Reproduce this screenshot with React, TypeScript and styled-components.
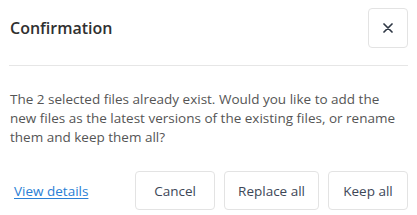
import styled, { createGlobalStyle } from "styled-components";

const GlobalStyle = createGlobalStyle`
    body {
        margin: 0;
        background: #ffffff;
        font-family: "Open Sans", "Liberation Sans", sans-serif;
    }
`

const Dialog = styled.div`
    width: 417px;
    height: 215px;
    box-sizing: border-box;
    padding: 8px 9px 0 9px;
    background: #ffffff;
`

const Header = styled.div`
    display: flex;
    align-items: center;
    justify-content: space-between;
    padding-bottom: 17px;
    border-bottom: 1px solid #e6e6e6;
`

const Title = styled.h2`
    margin: 0 0 0 1px;
    font-size: 16px;
    font-weight: 600;
    color: #303030;
`

const CloseButton = styled.button`
    width: 40px;
    height: 40px;
    display: flex;
    align-items: center;
    justify-content: center;
    padding: 0;
    background: #ffffff;
    border: 1px solid #e3e3e3;
    border-radius: 4px;
    color: #2f3845;
    cursor: pointer;
`

const Message = styled.p`
    margin: 24px 0 0 1px;
    font-size: 13.5px;
    line-height: 19px;
    color: #555555;
`

const Footer = styled.div`
    display: flex;
    align-items: center;
    margin-top: 24px;
`

const DetailsLink = styled.a`
    margin-left: 5px;
    font-size: 13.5px;
    color: #2a80d5;
    text-decoration: underline;
    text-underline-offset: 2px;
`

const Actions = styled.div`
    display: flex;
    gap: 9px;
    margin-left: auto;
`

const Button = styled.button`
    min-width: 80px;
    height: 39px;
    padding: 0 13px;
    background: #ffffff;
    border: 1px solid #e3e3e3;
    border-radius: 4px;
    font-family: "Open Sans", "Liberation Sans", sans-serif;
    font-size: 13.5px;
    color: #3d4757;
    cursor: pointer;
`

const CloseIcon = () => (
    <svg width="10" height="10" viewBox="0 0 10 10" fill="none">
        <path d="M1 1L9 9M9 1L1 9" stroke="currentColor" strokeWidth="1.7" strokeLinecap="round" />
    </svg>
)

export default function App() {
    return (
        <>
            <GlobalStyle />
            <Dialog>
                <Header>
                    <Title>Confirmation</Title>
                    <CloseButton aria-label="Close">
                        <CloseIcon />
                    </CloseButton>
                </Header>
                <Message>
                    The 2 selected files already exist. Would you like to add the new files as the latest
                    versions of the existing files, or rename them and keep them all?
                </Message>
                <Footer>
                    <DetailsLink href="#">View details</DetailsLink>
                    <Actions>
                        <Button>Cancel</Button>
                        <Button>Replace all</Button>
                        <Button>Keep all</Button>
                    </Actions>
                </Footer>
            </Dialog>
        </>
    );
}
